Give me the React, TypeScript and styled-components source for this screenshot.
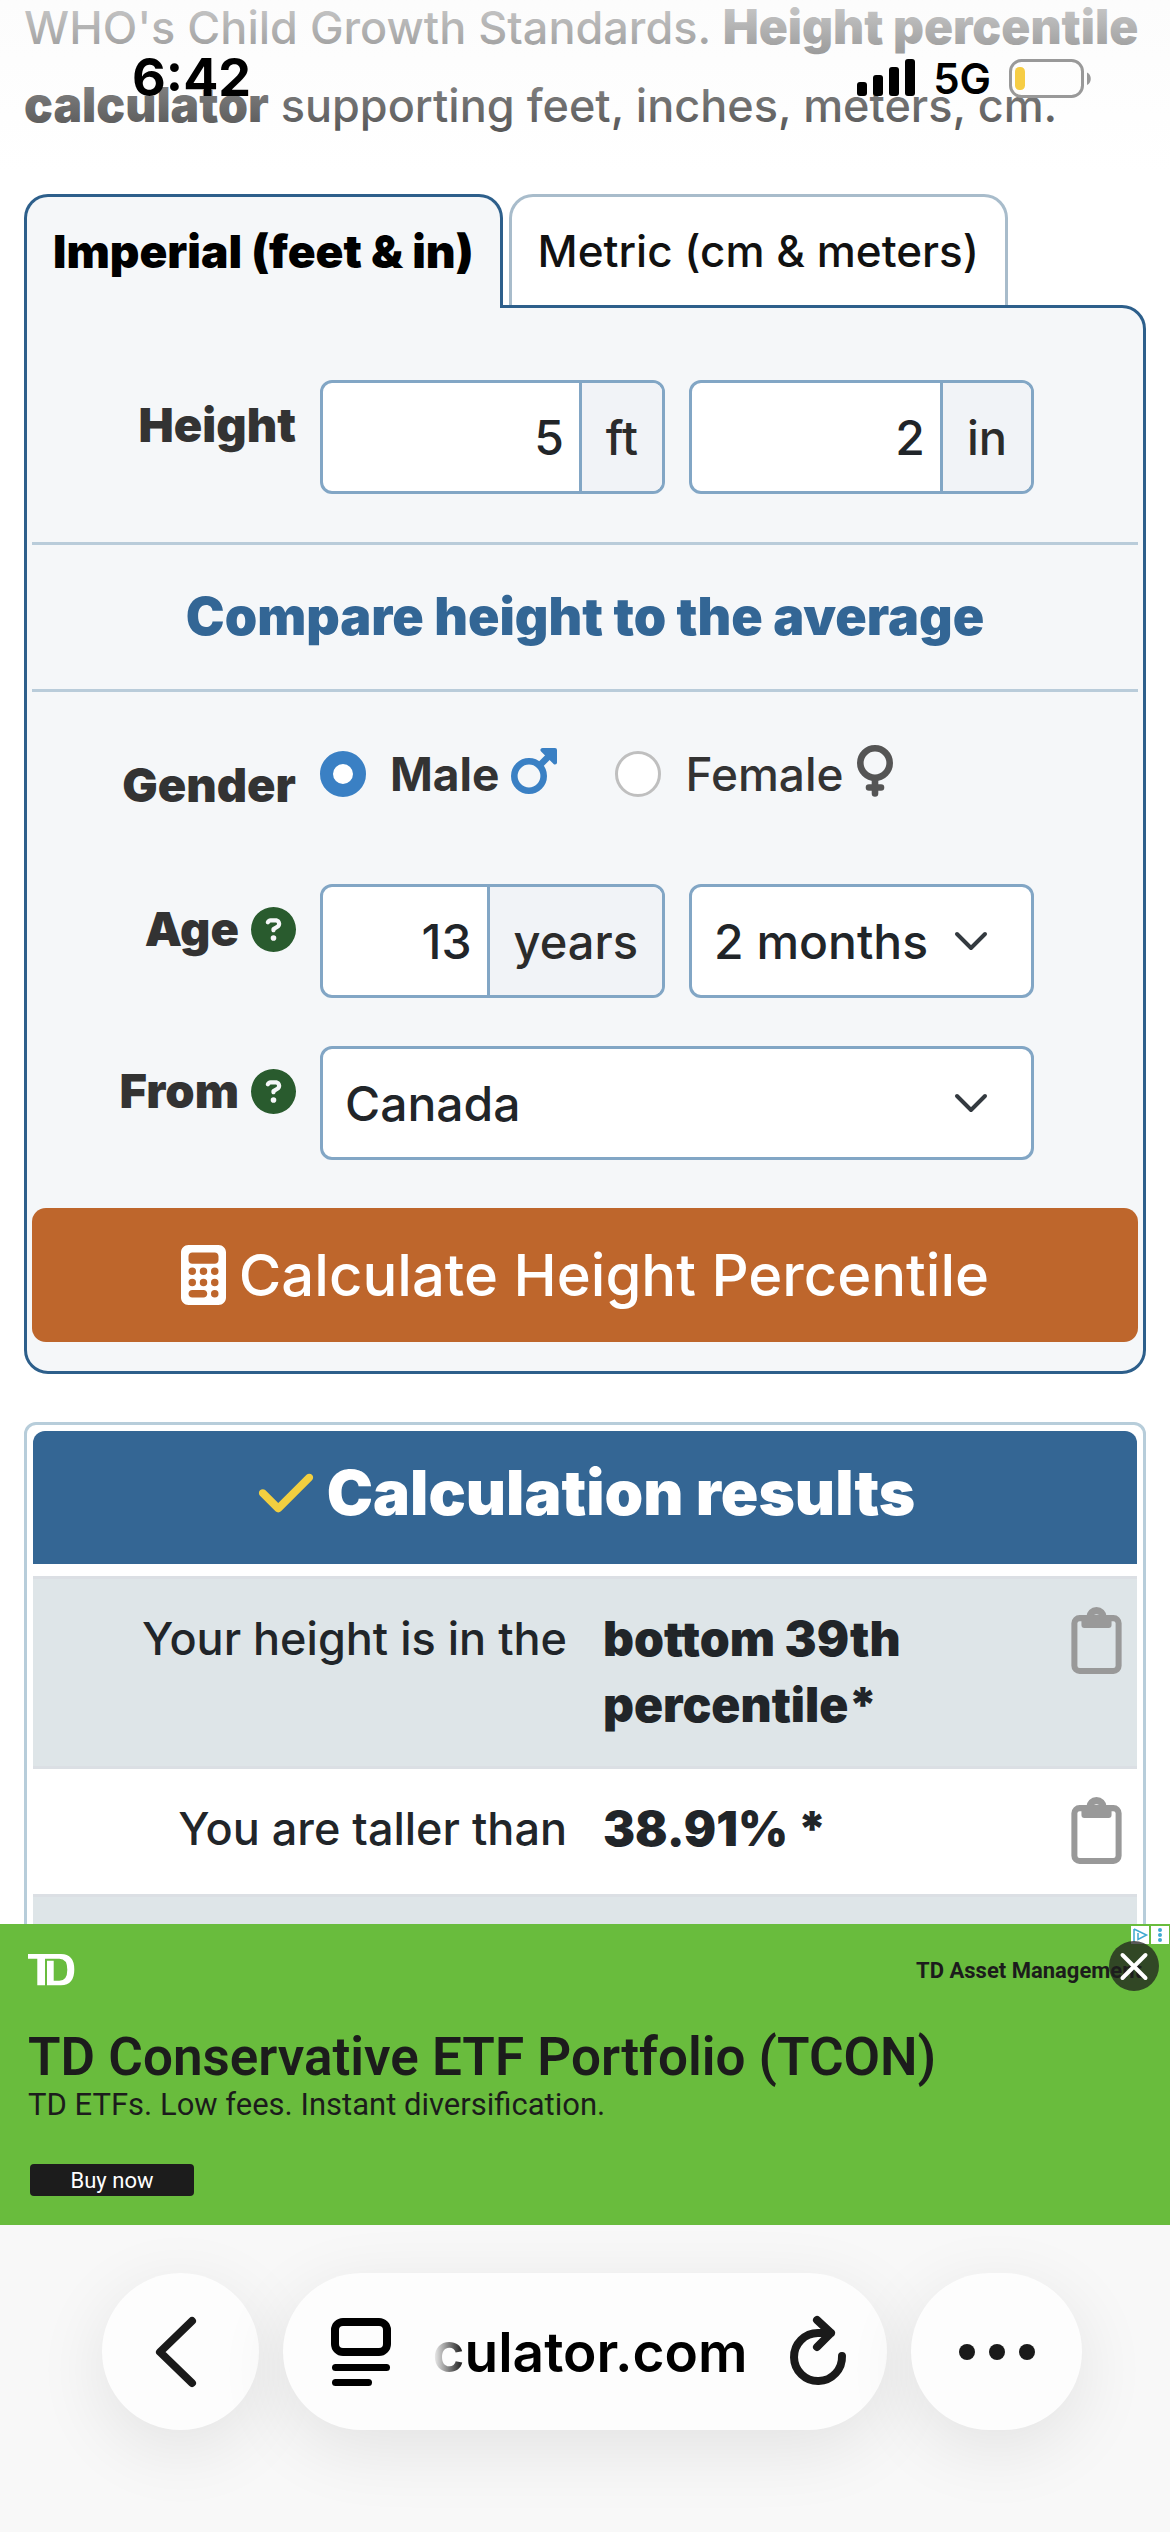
import React, { useState } from "react";
import styled, { createGlobalStyle, css } from "styled-components";
import { FaCalculator, FaCheck, FaCircleQuestion } from "react-icons/fa6";

const sans = `Inter, "Liberation Sans", sans-serif`;
const adSans = `Roboto, "Liberation Sans", sans-serif`;

const GlobalStyle = createGlobalStyle`
  *, *::before, *::after { box-sizing: border-box; }
  body { margin: 0; background: #fff; font-family: ${sans}; color: #212529; }
  button, input, select { font: inherit; color: inherit; margin: 0; }
`;

const Screen = styled.div`
  position: relative;
  display: flex;
  flex-direction: column;
  height: 100vh;
  overflow: hidden;
`;

/* ---------- status bar ---------- */

const StatusBar = styled.header`
  position: absolute;
  inset: 0 0 auto 0;
  z-index: 2;
  display: flex;
  justify-content: space-between;
  align-items: flex-start;
  height: 192px;
  padding: 46px 78px 0 132px;
  color: #000;
  background: linear-gradient(rgba(251, 251, 251, 0.76), rgba(255, 255, 255, 0) 90%);
  pointer-events: none;
`;

const Clock = styled.time`
  font-size: 52px;
  line-height: 64px;
  font-weight: 700;
`;

const Signals = styled.div`
  display: flex;
  align-items: center;
  gap: 18px;
  height: 64px;
  font-size: 42px;
  font-weight: 600;
`;

/* ---------- page ---------- */

const Page = styled.main`
  flex: 1;
  min-height: 0;
  overflow: hidden;
  padding: 0 24px;
`;

const Intro = styled.p`
  margin: -11px 0 49px;
  font-size: 45px;
  line-height: 78px;
  font-weight: 500;
  color: #333;

  b {
    font-size: 48px;
    line-height: 48px;
    font-weight: 900;
  }
`;

const Tabs = styled.div`
  display: flex;
  align-items: flex-start;
  gap: 6px;
`;

const Tab = styled.button<{ $active: boolean }>`
  height: 111px;
  padding: 0 26px;
  border: 3px solid #a8bccb;
  border-bottom: 0;
  border-radius: 24px 24px 0 0;
  background: #fff;
  color: #111;
  font-size: 44px;
  font-weight: 500;
  white-space: nowrap;

  ${(p) =>
    p.$active &&
    css`
      position: relative;
      height: 114px;
      margin-bottom: -3px;
      padding-bottom: 4px;
      border-color: #2d5f8b;
      background: #f5f7f9;
      color: #000;
      font-size: 46px;
      font-weight: 900;
    `}
`;

const Panel = styled.form`
  padding: 0 5px 29px;
  border: 3px solid #2d5f8b;
  border-radius: 0 24px 24px 24px;
  background: #f5f7f9;
`;

const Fields = styled.div<{ $first?: boolean }>`
  display: flex;
  flex-direction: column;
  gap: 48px;
  padding: ${(p) => (p.$first ? 72 : 48)}px 104px 48px 0;
`;

const Field = styled.div`
  display: grid;
  grid-template-columns: 264px 1fr;
  column-gap: 24px;
  align-items: start;
`;

const FieldLabel = styled.label`
  display: flex;
  justify-content: flex-end;
  align-items: center;
  gap: 12px;
  padding-top: 12px;
  font-size: 47px;
  line-height: 66px;
  font-weight: 900;
  color: #333;
`;

const Help = styled(FaCircleQuestion)`
  width: 45px;
  height: 45px;
  color: #295b2e;
`;

const Controls = styled.div`
  display: grid;
  grid-template-columns: 1fr 1fr;
  gap: 24px;
`;

const box = css`
  height: 114px;
  border: 3px solid #82a6c5;
  border-radius: 12px;
  background: #fff;
  font-size: 48px;
  font-weight: 500;
`;

const InputGroup = styled.div`
  ${box}
  display: flex;
  overflow: hidden;
`;

const NumberBox = styled.input`
  flex: 1;
  min-width: 0;
  width: 0;
  padding: 0 15px;
  border: 0;
  outline: 0;
  background: transparent;
  text-align: right;
`;

const Unit = styled.span`
  display: flex;
  align-items: center;
  padding: 0 24px;
  border-left: 3px solid #82a6c5;
  background: #f1f3f7;
  color: #2b2b2b;
  font-size: 47px;
`;

const SelectWrap = styled.div<{ $wide?: boolean }>`
  display: grid;
  align-items: center;
  grid-column: ${(p) => (p.$wide ? "1 / -1" : "auto")};

  > * {
    grid-area: 1 / 1;
  }
  > svg {
    justify-self: end;
    margin-right: 44px;
    pointer-events: none;
  }
`;

const Select = styled.select`
  ${box}
  width: 100%;
  padding: 0 22px;
  appearance: none;
`;

const RadioGroup = styled.div`
  display: flex;
  gap: 58px;
  min-height: 96px;
`;

const RadioLabel = styled.label<{ $checked: boolean }>`
  display: flex;
  align-items: center;
  height: 68px;
  color: #333;
  font-size: 46px;
  font-weight: ${(p) => (p.$checked ? 700 : 500)};

  > svg {
    margin: 0 0 6px 12px;
    color: ${(p) => (p.$checked ? "#3a80c4" : "#555")};
  }
`;

const Radio = styled.input`
  appearance: none;
  width: 46px;
  height: 46px;
  margin-right: 24px;
  border: 3px solid #bfbfbf;
  border-radius: 50%;
  background: #fff;

  &:checked {
    border: 13px solid #3a80c4;
  }
`;

const SectionTitle = styled.h2`
  margin: 0;
  padding: 33px 0;
  border: solid #b9ccda;
  border-width: 3px 0;
  color: #336695;
  font-size: 52px;
  line-height: 78px;
  font-weight: 900;
  text-align: center;
`;

const Submit = styled.button`
  display: flex;
  align-items: center;
  justify-content: center;
  gap: 13px;
  width: 100%;
  height: 134px;
  border: 0;
  border-radius: 14px;
  background: #be662c;
  color: #fff;
  font-size: 58px;
  font-weight: 500;
`;

const CalculatorIcon = styled(FaCalculator)`
  width: 45px;
  height: 60px;
`;

/* ---------- results ---------- */

const Results = styled.section`
  margin-top: 48px;
  padding: 6px;
  border: 3px solid #b7cdda;
  border-radius: 12px;
`;

const ResultsTitle = styled.h2`
  display: flex;
  align-items: center;
  justify-content: center;
  gap: 10px;
  height: 133px;
  margin: 0 0 12px;
  padding-bottom: 10px;
  border-radius: 12px 12px 0 0;
  background: #346694;
  color: #fff;
  font-size: 62px;
  font-weight: 900;

  > svg {
    color: #f2cf40;
  }
`;

const Table = styled.table`
  width: 100%;
  border-collapse: separate;
  border-spacing: 0;
  font-size: 45px;
  line-height: 66px;
  font-weight: 500;
  color: #212529;
`;

const Row = styled.tr<{ $striped: boolean }>`
  background: ${(p) => (p.$striped ? "#dee5e8" : "#fff")};

  > * {
    padding: 27px 18px 28px;
    border-top: 3px solid #dbdfe4;
    vertical-align: top;
  }
`;

const Name = styled.th`
  width: 50%;
  font-weight: 500;
  text-align: right;
`;

const Value = styled.td`
  font-size: 48px;
  font-weight: 900;
`;

const CopyCell = styled.td`
  width: 81px;
  && {
    padding: 27px 15px;
  }
`;

const CopyButton = styled.button`
  display: block;
  height: 71px;
  padding: 0 0 2px;
  border: 0;
  background: none;
  color: #999;

  > svg {
    display: block;
  }
`;

/* ---------- advert ---------- */

const Ad = styled.aside`
  position: relative;
  display: flex;
  flex-direction: column;
  height: 301px;
  padding: 30px 28px 29px;
  background: #69bc3d;
  color: #1c1c1c;
  font-family: ${adSans};
`;

const AdTop = styled.div`
  display: flex;
  justify-content: space-between;
  align-items: center;
  height: 32px;
  font-size: 22px;
  font-weight: 700;
`;

const AdTitle = styled.div`
  margin-top: 41px;
  font-size: 53px;
  line-height: 60px;
  font-weight: 600;
`;

const AdText = styled.div`
  font-size: 31px;
  line-height: 36px;
`;

const AdButton = styled.button`
  width: 164px;
  height: 32px;
  margin: auto 0 0 2px;
  padding: 0;
  border: 0;
  border-radius: 4px;
  background: #1c1c1c;
  color: #fff;
  font-size: 22px;
`;

const AdChoices = styled.div`
  position: absolute;
  top: 2px;
  right: 1px;
  display: flex;
  gap: 2px;

  > svg {
    background: #fff;
  }
`;

const AdClose = styled.button`
  position: absolute;
  top: 17px;
  right: 11px;
  width: 50px;
  height: 50px;
  padding: 0;
  border: 0;
  border-radius: 50%;
  background: rgba(30, 30, 30, 0.74);
  color: #fff;

  > svg {
    display: block;
  }
`;

/* ---------- browser toolbar ---------- */

const Toolbar = styled.nav`
  display: flex;
  gap: 24px;
  height: 307px;
  padding: 48px 88px 102px 102px;
  background: #f8f8f8;
`;

const pill = css`
  height: 157px;
  border: 0;
  border-radius: 79px;
  background: #fdfdfd;
  color: #1a1a1a;
  box-shadow: 0 18px 72px rgba(0, 0, 0, 0.09);
`;

const ToolButton = styled.button<{ $wide?: boolean }>`
  ${pill}
  display: grid;
  place-items: center;
  width: ${(p) => (p.$wide ? 171 : 157)}px;
  padding: 0;
`;

const BackButton = styled(ToolButton)`
  padding-right: 10px;
`;

const AddressBar = styled.div`
  ${pill}
  flex: 1;
  display: flex;
  align-items: center;
  justify-content: space-between;
  padding: 0 40px 0 48px;
`;

const PlainButton = styled.button`
  display: block;
  padding: 0;
  border: 0;
  background: none;
  color: #1a1a1a;

  > svg {
    display: block;
  }
`;

const Address = styled.span`
  color: #000;
  font-size: 55px;
  font-weight: 600;
  mask-image: linear-gradient(to right, transparent, #000 34px);
`;

/* ---------- drawings ---------- */

const SignalIcon = () => (
  <svg width="58" height="38" viewBox="0 0 58 38" aria-hidden="true">
    <rect x="0" y="23" width="10" height="14" rx="3" />
    <rect x="16" y="16" width="10" height="21" rx="3" />
    <rect x="32" y="8" width="10" height="29" rx="3" />
    <rect x="48" y="0" width="10" height="37" rx="3" />
  </svg>
);

const BatteryIcon = () => (
  <svg width="83" height="39" viewBox="0 0 83 39" aria-hidden="true">
    <rect x="1.5" y="1.5" width="72" height="36" rx="11" fill="none" stroke="#999" strokeWidth="3" />
    <rect x="6" y="8" width="10" height="23" rx="4.5" fill="#f6cd45" />
    <path d="M78 13.5c5 2 5 10.5 0 12.5z" fill="#999" />
  </svg>
);

const ChevronDown = () => (
  <svg width="38" height="22" viewBox="0 0 38 22" fill="none" aria-hidden="true">
    <path d="M5 4l14 14L33 4" stroke="#343a40" strokeWidth="4" strokeLinecap="round" strokeLinejoin="round" />
  </svg>
);

const MaleIcon = () => (
  <svg width="46" height="46" viewBox="0 0 46 46" fill="none" stroke="currentColor" aria-hidden="true">
    <circle cx="18" cy="28" r="14.7" strokeWidth="6.6" />
    <path d="M28 18l9-9" strokeWidth="6.6" />
    <path d="M31.500 2H44v12.500z" fill="currentColor" strokeWidth="4" strokeLinejoin="round" />
  </svg>
);

const FemaleIcon = () => (
  <svg width="38" height="52" viewBox="0 0 38 52" fill="none" stroke="currentColor" aria-hidden="true">
    <circle cx="19" cy="18" r="14.7" strokeWidth="6.6" />
    <path d="M19 35v13.500M13 42.500h12" strokeWidth="6.6" strokeLinecap="round" />
  </svg>
);

const ClipboardIcon = () => (
  <svg width="51" height="67" viewBox="0 0 384 512" aria-hidden="true">
    <rect x="23" y="85" width="338" height="404" rx="40" fill="none" stroke="currentColor" strokeWidth="46" />
    <path
      fill="currentColor"
      fillRule="evenodd"
      d="M114 78a78 78 0 0 1 156 0h37v60q0 22-22 22H99q-22 0-22-22V78zM192 56a25 25 0 1 0 0 50a25 25 0 1 0 0-50z"
    />
  </svg>
);

const TdLogo = () => (
  <svg width="47" height="32" viewBox="0 0 47 32" fill="#fff" role="img" aria-label="TD">
    <path d="M0 0H33Q46.300 0 46.300 15.600T33 31.300H19V6.700h6.700v20h5.600q8 0 8-11t-8-11H17v26.600H9.300V4.700H0z" />
  </svg>
);

const BackIcon = () => (
  <svg width="44" height="74" viewBox="0 0 44 74" fill="none" aria-hidden="true">
    <path d="M38 6L6 37l32 31" stroke="currentColor" strokeWidth="8" strokeLinecap="round" strokeLinejoin="round" />
  </svg>
);

const ReaderIcon = () => (
  <svg width="60" height="68" viewBox="0 0 60 68" aria-hidden="true">
    <rect x="4" y="4" width="52" height="30" rx="8" fill="none" stroke="#000" strokeWidth="8" />
    <rect x="1" y="46" width="58" height="7" rx="3.5" />
    <rect x="1" y="61" width="40" height="7" rx="3.5" />
  </svg>
);

const ReloadIcon = () => (
  <svg width="58" height="76" viewBox="0 0 58 76" fill="none" aria-hidden="true">
    <path
      d="M53 42a24 24 0 1 1-24-23h13M28 6l14 13-14 14"
      stroke="currentColor"
      strokeWidth="8"
      strokeLinecap="round"
      strokeLinejoin="round"
    />
  </svg>
);

const MoreIcon = () => (
  <svg width="76" height="16" viewBox="0 0 76 16" fill="currentColor" aria-hidden="true">
    <circle cx="8" cy="8" r="8" />
    <circle cx="38" cy="8" r="8" />
    <circle cx="68" cy="8" r="8" />
  </svg>
);

const rows = [
  { name: "Your height is in the", value: "bottom 39th percentile*" },
  { name: "You are taller than", value: "38.91% *" },
];

export default function App() {
  const [units, setUnits] = useState("imperial");
  const [gender, setGender] = useState("male");

  return (
    <>
      <GlobalStyle />
      <Screen>
        <StatusBar>
          <Clock>6:42</Clock>
          <Signals>
            <SignalIcon />
            5G
            <BatteryIcon />
          </Signals>
        </StatusBar>

        <Page>
          <Intro>
            WHO's Child Growth Standards. <b>Height percentile calculator</b> supporting feet, inches, meters, cm.
          </Intro>

          <Tabs role="tablist">
            <Tab role="tab" aria-selected={units === "imperial"} $active={units === "imperial"} onClick={() => setUnits("imperial")}>
              Imperial (feet &amp; in)
            </Tab>
            <Tab role="tab" aria-selected={units === "metric"} $active={units === "metric"} onClick={() => setUnits("metric")}>
              Metric (cm &amp; meters)
            </Tab>
          </Tabs>

          <Panel onSubmit={(e) => e.preventDefault()}>
            <Fields $first>
              <Field>
                <FieldLabel htmlFor="feet">Height</FieldLabel>
                <Controls>
                  <InputGroup>
                    <NumberBox id="feet" inputMode="numeric" defaultValue="5" />
                    <Unit>ft</Unit>
                  </InputGroup>
                  <InputGroup>
                    <NumberBox aria-label="Inches" inputMode="numeric" defaultValue="2" />
                    <Unit>in</Unit>
                  </InputGroup>
                </Controls>
              </Field>
            </Fields>

            <SectionTitle>Compare height to the average</SectionTitle>

            <Fields>
              <Field>
                <FieldLabel as="span" id="gender">Gender</FieldLabel>
                <RadioGroup role="radiogroup" aria-labelledby="gender">
                  <RadioLabel $checked={gender === "male"}>
                    <Radio type="radio" name="gender" checked={gender === "male"} onChange={() => setGender("male")} />
                    Male
                    <MaleIcon />
                  </RadioLabel>
                  <RadioLabel $checked={gender === "female"}>
                    <Radio type="radio" name="gender" checked={gender === "female"} onChange={() => setGender("female")} />
                    Female
                    <FemaleIcon />
                  </RadioLabel>
                </RadioGroup>
              </Field>

              <Field>
                <FieldLabel htmlFor="age">
                  Age <Help />
                </FieldLabel>
                <Controls>
                  <InputGroup>
                    <NumberBox id="age" inputMode="numeric" defaultValue="13" />
                    <Unit>years</Unit>
                  </InputGroup>
                  <SelectWrap>
                    <Select aria-label="Months" defaultValue="2">
                      <option value="2">2 months</option>
                    </Select>
                    <ChevronDown />
                  </SelectWrap>
                </Controls>
              </Field>

              <Field>
                <FieldLabel htmlFor="country">
                  From <Help />
                </FieldLabel>
                <Controls>
                  <SelectWrap $wide>
                    <Select id="country" defaultValue="ca">
                      <option value="ca">Canada</option>
                    </Select>
                    <ChevronDown />
                  </SelectWrap>
                </Controls>
              </Field>
            </Fields>

            <Submit type="submit">
              <CalculatorIcon />
              Calculate Height Percentile
            </Submit>
          </Panel>

          <Results>
            <ResultsTitle>
              <FaCheck size={62} />
              Calculation results
            </ResultsTitle>
            <Table>
              <tbody>
                {rows.map((r, i) => (
                  <Row key={r.name} $striped={i % 2 === 0}>
                    <Name scope="row">{r.name}</Name>
                    <Value>{r.value}</Value>
                    <CopyCell>
                      <CopyButton aria-label="Copy">
                        <ClipboardIcon />
                      </CopyButton>
                    </CopyCell>
                  </Row>
                ))}
                <Row $striped>
                  <td colSpan={3} />
                </Row>
              </tbody>
            </Table>
          </Results>
        </Page>

        <Ad>
          <AdTop>
            <TdLogo />
            <span>TD Asset Management</span>
          </AdTop>
          <AdTitle>TD Conservative ETF Portfolio (TCON)</AdTitle>
          <AdText>TD ETFs. Low fees. Instant diversification.</AdText>
          <AdButton>Buy now</AdButton>
          <AdChoices>
            <svg width="18" height="18" viewBox="0 0 18 18" fill="none" stroke="#3fa9cf" strokeWidth="1.5" aria-hidden="true">
              <path d="M3 3v12.500M3 3l12.500 6L7 13.500V7" />
            </svg>
            <svg width="18" height="18" viewBox="0 0 18 18" fill="#3fa9cf" aria-hidden="true">
              <circle cx="9" cy="4" r="2" />
              <circle cx="9" cy="9" r="2" />
              <circle cx="9" cy="14" r="2" />
            </svg>
          </AdChoices>
          <AdClose aria-label="Close">
            <svg width="50" height="50" viewBox="0 0 50 50" fill="none" aria-hidden="true">
              <path d="M13.500 14l23 23M36.500 14l-23 23" stroke="currentColor" strokeWidth="4" strokeLinecap="round" />
            </svg>
          </AdClose>
        </Ad>

        <Toolbar>
          <BackButton aria-label="Back">
            <BackIcon />
          </BackButton>
          <AddressBar>
            <PlainButton aria-label="Page menu">
              <ReaderIcon />
            </PlainButton>
            <Address>culator.com</Address>
            <PlainButton aria-label="Reload">
              <ReloadIcon />
            </PlainButton>
          </AddressBar>
          <ToolButton $wide aria-label="More">
            <MoreIcon />
          </ToolButton>
        </Toolbar>
      </Screen>
    </>
  );
}
